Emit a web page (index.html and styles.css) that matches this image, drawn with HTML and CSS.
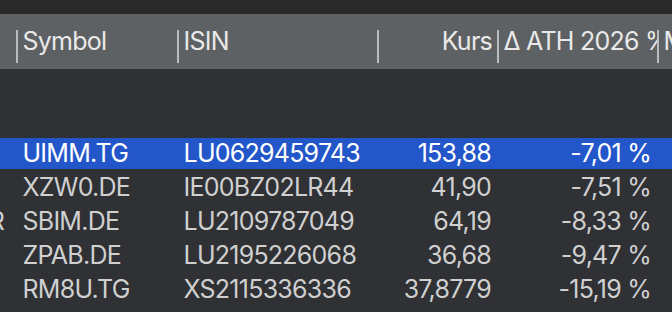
FILE: index.html
```html
<!DOCTYPE html>
<html lang="de">
<head>
<meta charset="utf-8">
<title>Watchlist</title>
<link rel="stylesheet" href="styles.css">
</head>
<body>
<div class="window">
  <div class="topbar"></div>
  <div class="header">
    <div class="hcell c-pre"></div>
    <div class="hcell c-sym"><span class="sep"></span><span class="htext">Symbol</span></div>
    <div class="hcell c-isin"><span class="sep"></span><span class="htext">ISIN</span></div>
    <div class="hcell c-kurs"><span class="sep"></span><span class="htext right">Kurs</span></div>
    <div class="hcell c-ath"><span class="sep"></span><span class="htext">Δ ATH 2026 %</span></div>
    <div class="hcell c-more"><span class="sep"></span><span class="htext">Marktwert</span></div>
  </div>
  <div class="spacer"></div>
  <div class="rows">
    <div class="row selected">
      <div class="cell c-pre"></div>
      <div class="cell c-sym">UIMM.TG</div>
      <div class="cell c-isin">LU0629459743</div>
      <div class="cell c-kurs right">153,88</div>
      <div class="cell c-ath right">-7,01 %</div>
    </div>
    <div class="row">
      <div class="cell c-pre"></div>
      <div class="cell c-sym">XZW0.DE</div>
      <div class="cell c-isin">IE00BZ02LR44</div>
      <div class="cell c-kurs right">41,90</div>
      <div class="cell c-ath right">-7,51 %</div>
    </div>
    <div class="row">
      <div class="cell c-pre pre">EUR</div>
      <div class="cell c-sym">SBIM.DE</div>
      <div class="cell c-isin">LU2109787049</div>
      <div class="cell c-kurs right">64,19</div>
      <div class="cell c-ath right">-8,33 %</div>
    </div>
    <div class="row">
      <div class="cell c-pre"></div>
      <div class="cell c-sym">ZPAB.DE</div>
      <div class="cell c-isin">LU2195226068</div>
      <div class="cell c-kurs right">36,68</div>
      <div class="cell c-ath right">-9,47 %</div>
    </div>
    <div class="row">
      <div class="cell c-pre"></div>
      <div class="cell c-sym">RM8U.TG</div>
      <div class="cell c-isin">XS2115336336</div>
      <div class="cell c-kurs right">37,8779</div>
      <div class="cell c-ath right">-15,19 %</div>
    </div>
  </div>
</div>
</body>
</html>
```

FILE: styles.css
```css
html, body {
  margin: 0;
  padding: 0;
  background: #2f3134;
  overflow: hidden;
}
.window {
  width: 672px;
  height: 312px;
  overflow: hidden;
  font-family: Inter, "Liberation Sans", sans-serif;
  font-size: 25px;
  letter-spacing: -0.03em;
  background: #2f3134;
}
.topbar {
  height: 14px;
  background: #2a2a2b;
}
.header {
  height: 55px;
  background: #5e6163;
  display: flex;
  white-space: nowrap;
}
.hcell {
  height: 55px;
  display: flex;
  align-items: flex-start;
  overflow: hidden;
  flex: none;
  color: #e9e9e9;
}
.sep {
  flex: none;
  width: 1.5px;
  height: 33px;
  margin-top: 16px;
  background: #b9bcbe;
}
.htext {
  flex: 1 0 auto;
  margin-top: 12px;
  line-height: 30px;
  padding: 0 5px;
}
.htext.right { text-align: right; }
.c-pre { width: 16px; }
.c-sym { width: 161px; }
.c-isin { width: 200px; }
.c-kurs { width: 120px; }
.c-ath { width: 160px; }
.c-more { width: 60px; }
.spacer { height: 69px; }
.rows {
  display: flex;
  flex-direction: column;
  gap: 3px;
}
.row {
  display: flex;
  height: 31px;
  line-height: 31px;
  color: #d0d0d1;
  white-space: nowrap;
}
.row.selected {
  background: #2356c9;
  color: #ffffff;
}
.cell {
  flex: none;
  box-sizing: border-box;
  padding: 0 6px 0 6.5px;
  overflow: hidden;
}
.cell.c-pre {
  padding: 0;
  display: flex;
  justify-content: flex-end;
}
.cell.pre {
  padding-right: 12px;
}
.right { text-align: right; }
```
